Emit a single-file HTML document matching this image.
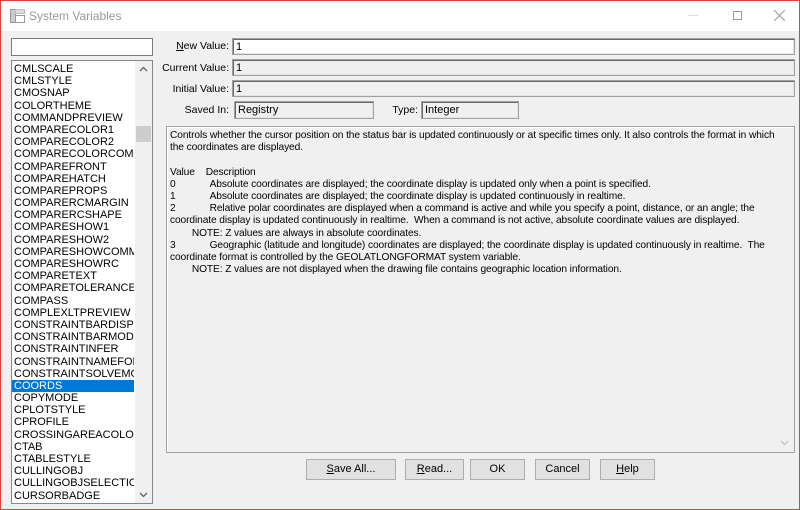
<!DOCTYPE html>
<html><head><style>
*{margin:0;padding:0;box-sizing:border-box}
body{width:800px;height:510px;overflow:hidden;background:#f0f0f0;font-family:"Liberation Sans",sans-serif;font-size:11px;color:#000;position:relative}
.win{position:absolute;left:0;top:0;width:800px;height:510px;border:1px solid #e04040;background:#f0f0f0}
.title{position:absolute;left:0;top:0;width:798px;height:30px;background:#fff}
.abs{position:absolute}
.box{position:absolute;border:1px solid #a0a0a0;box-shadow:inset 1px 1px 0 #696969, inset -1px -1px 0 #e3e3e3;background:#f0f0f0;padding:2px 0 0 3px;font-size:11px;line-height:12px}
.lbl{position:absolute;text-align:right;font-size:10.5px}
.list{position:absolute;left:10px;top:59px;width:142px;height:444px;background:#fff;border:1px solid #828790}
.item{height:12.2px;line-height:12.2px;font-size:11px;padding-left:2px;white-space:nowrap;overflow:hidden;width:122px}
.sel{background:#0078d7;color:#fff}
.btn{position:absolute;top:458px;height:21px;background:#e1e1e1;border:1px solid #adadad;text-align:center;line-height:19px;font-size:11px}
.desc{position:absolute;left:165px;top:125px;width:629px;height:327px;border:1px solid #a0a0a0;box-shadow:inset 1px 1px 0 #fff;padding:3px 3px;font-size:10.2px;line-height:12.2px;letter-spacing:-0.1px}
</style></head><body><div class="win">
<div class="title">
<svg class="abs" style="left:9px;top:8px" width="16" height="14"><rect x="0.5" y="0.5" width="5" height="13" fill="#ccc" stroke="#999"/><rect x="5.5" y="6.5" width="9" height="7" fill="#fff" stroke="#999"/><rect x="5.5" y="0.5" width="9" height="4" fill="#ddd" stroke="#bbb"/></svg>
<div class="abs" style="left:28px;top:8px;font-size:12px;color:#999">System Variables</div>
<div class="abs" style="left:687px;top:14px;width:10px;height:1px;background:#ddd"></div>
<div class="abs" style="left:732px;top:10px;width:9px;height:9px;border:1px solid #999"></div>
<svg class="abs" style="left:773px;top:9px" width="11" height="11"><path d="M0 0L11 11M11 0L0 11" stroke="#999"/></svg>
</div>
<div class="abs" style="left:10px;top:37px;width:142px;height:18px;background:#fff;border:1px solid #7a7a7a"></div>
<div class="list">
<div style="position:absolute;right:0;top:0;width:17px;height:442px;background:#f0f0f0"></div>
<div style="position:absolute;right:1px;top:65px;width:15px;height:16px;background:#cdcdcd"></div>
<svg class="abs" style="right:4px;top:5px" width="9" height="6"><path d="M1 5L4.5 1.5L8 5" stroke="#606060" fill="none" stroke-width="1.3"/></svg>
<svg class="abs" style="right:4px;top:431px" width="9" height="6"><path d="M1 1L4.5 4.5L8 1" stroke="#606060" fill="none" stroke-width="1.3"/></svg>
<div style="padding-top:2px">
<div class="item">CMLSCALE</div><div class="item">CMLSTYLE</div><div class="item">CMOSNAP</div><div class="item">COLORTHEME</div><div class="item">COMMANDPREVIEW</div><div class="item">COMPARECOLOR1</div><div class="item">COMPARECOLOR2</div><div class="item">COMPARECOLORCOMMON</div><div class="item">COMPAREFRONT</div><div class="item">COMPAREHATCH</div><div class="item">COMPAREPROPS</div><div class="item">COMPARERCMARGIN</div><div class="item">COMPARERCSHAPE</div><div class="item">COMPARESHOW1</div><div class="item">COMPARESHOW2</div><div class="item">COMPARESHOWCOMMON</div><div class="item">COMPARESHOWRC</div><div class="item">COMPARETEXT</div><div class="item">COMPARETOLERANCE</div><div class="item">COMPASS</div><div class="item">COMPLEXLTPREVIEW</div><div class="item">CONSTRAINTBARDISPLAY</div><div class="item">CONSTRAINTBARMODE</div><div class="item">CONSTRAINTINFER</div><div class="item">CONSTRAINTNAMEFORMAT</div><div class="item">CONSTRAINTSOLVEMODE</div><div class="item sel">COORDS</div><div class="item">COPYMODE</div><div class="item">CPLOTSTYLE</div><div class="item">CPROFILE</div><div class="item">CROSSINGAREACOLOR</div><div class="item">CTAB</div><div class="item">CTABLESTYLE</div><div class="item">CULLINGOBJ</div><div class="item">CULLINGOBJSELECTION</div><div class="item">CURSORBADGE</div>
</div></div>
<div class="lbl" style="left:150px;width:78px;top:39px"><u>N</u>ew Value:</div>
<div class="lbl" style="left:150px;width:78px;top:61px">Current Value:</div>
<div class="lbl" style="left:150px;width:78px;top:82px">Initial Value:</div>
<div class="lbl" style="left:150px;width:78px;top:103px">Saved In:</div>
<div class="box" style="left:231px;top:37px;width:563px;height:17px;background:#fff">1</div>
<div class="box" style="left:231px;top:58px;width:563px;height:17px">1</div>
<div class="box" style="left:231px;top:79px;width:563px;height:17px">1</div>
<div class="box" style="left:233px;top:100px;width:140px;height:18px">Registry</div>
<div class="lbl" style="left:380px;width:37px;top:103px">Type:</div>
<div class="box" style="left:420px;top:100px;width:98px;height:18px">Integer</div>
<div class="desc">Controls whether the cursor position on the status bar is updated continuously or at specific times only. It also controls the format in which the coordinates are displayed.<br><br>Value&nbsp;&nbsp;&nbsp;&nbsp;Description<br>0<span style="display:inline-block;width:34px"></span>Absolute coordinates are displayed; the coordinate display is updated only when a point is specified.<br>1<span style="display:inline-block;width:34px"></span>Absolute coordinates are displayed; the coordinate display is updated continuously in realtime.<br>2<span style="display:inline-block;width:34px"></span>Relative polar coordinates are displayed when a command is active and while you specify a point, distance, or an angle; the coordinate display is updated continuously in realtime.&nbsp; When a command is not active, absolute coordinate values are displayed.<br>&nbsp;&nbsp;&nbsp;&nbsp;&nbsp;&nbsp;&nbsp;&nbsp;NOTE: Z values are always in absolute coordinates.<br>3<span style="display:inline-block;width:34px"></span>Geographic (latitude and longitude) coordinates are displayed; the coordinate display is updated continuously in realtime.&nbsp; The coordinate format is controlled by the GEOLATLONGFORMAT system variable.<br>&nbsp;&nbsp;&nbsp;&nbsp;&nbsp;&nbsp;&nbsp;&nbsp;NOTE: Z values are not displayed when the drawing file contains geographic location information.
<svg class="abs" style="right:5px;bottom:6px" width="9" height="6"><path d="M1 1L4.5 4.5L8 1" stroke="#bbb" fill="none" stroke-width="1.2"/></svg>
</div>
<div class="btn" style="left:305px;width:90px"><u>S</u>ave All...</div>
<div class="btn" style="left:404px;width:59px"><u>R</u>ead...</div>
<div class="btn" style="left:469px;width:55px">OK</div>
<div class="btn" style="left:534px;width:55px">Cancel</div>
<div class="btn" style="left:599px;width:55px"><u>H</u>elp</div>
</div></body></html>
